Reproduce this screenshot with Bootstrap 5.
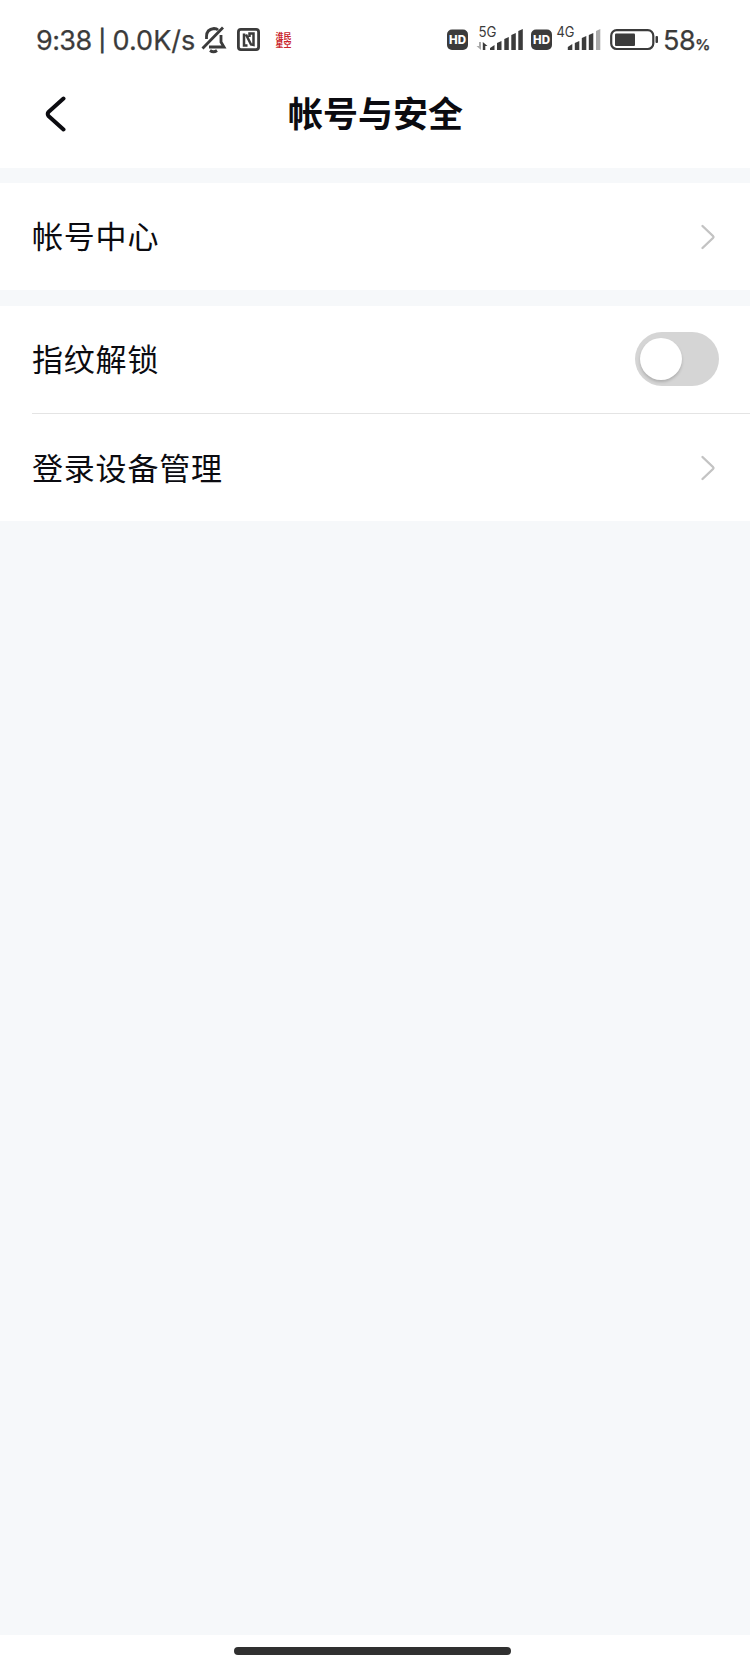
<!DOCTYPE html>
<html lang="zh-CN">
<head>
<meta charset="utf-8">
<meta name="viewport" content="width=device-width, initial-scale=1">
<title>帐号与安全</title>
<link href="https://cdn.jsdelivr.net/npm/bootstrap@5.3.0/dist/css/bootstrap.min.css" rel="stylesheet">
<style>
body{font-family:"Noto Sans CJK SC",sans-serif;background:#f6f8fa;color:#0b0b10;overflow:hidden}
svg{display:block;flex:none}
.status-bar{height:80px;padding-left:36px;color:#3b3b3b;font-family:Inter,sans-serif;line-height:1;white-space:nowrap}
.clock{font-size:27px;width:163px;letter-spacing:-.6px;-webkit-text-stroke:.25px #3b3b3b}
.clock .pipe{font-size:21px;margin:0 2px;vertical-align:2px;-webkit-text-stroke:.8px #3b3b3b}
.clock .speed{letter-spacing:.05px}
.battery-text{font-size:27px;width:60px;letter-spacing:-.4px;margin-right:28px;-webkit-text-stroke:.25px #3b3b3b}
.battery-text .digits{margin-left:1px}
.battery-text small{font-size:15px;font-weight:600}
.title-bar{height:88px;padding:0 45px 21px}
.title-bar h1{font-size:35px;font-weight:700;line-height:1;margin:0 0 4px}
.block-gap{height:15px}
.block-gap-lg{height:16px}
.setting{height:107px;padding:0 32px;font-size:31px;letter-spacing:.8px;line-height:1;color:#0b0b10}
.setting .label-text{padding-bottom:4px}
.setting .label-low{padding-bottom:3px}
.rule-line{height:1px;margin-left:32px;background:#e4e4e4}
.toggle-track{width:84px;height:54px;background:#d5d5d5;padding:6px 5px;margin-right:-1px;margin-bottom:2px}
.toggle-thumb{width:42px;height:42px;background:#fff;box-shadow:0 2px 3px rgba(0,0,0,.18)}
.nav-area{height:31px}
.home-pill{width:277px;height:8px;background:#303030;margin-right:5px}
</style>
<script src="https://cdn.jsdelivr.net/npm/bootstrap@5.3.0/dist/js/bootstrap.bundle.min.js"></script>
</head>
<body class="d-flex flex-column vh-100">
<header class="bg-white">
  <div class="status-bar d-flex align-items-center">
    <span class="clock">9:38<span class="pipe"> | </span><span class="speed">0.0K/s</span></span>
    <svg width="93" height="80" viewBox="199 0 93 80" fill="none" stroke="#3b3b3b" stroke-width="2.800">
      <path d="M206.500 39V36.500C206.500 31.500 209 29 214 28.500C216 28.600 217 29 218 30M221 35V42L224 47H209M202.500 48.500L223 27.500"/><path d="M210 50.500Q213.500 53 217 50.500"/>
      <rect x="238.400" y="29.400" width="20.200" height="20.200" rx="2.500"/>
      <path stroke-width="2.500" d="M244 33.500V45.500H247.500M246 34.500L251 44.500L253.500 45V33.500H249.500V37"/>
      <g fill="#c9252c" stroke="none" font-family="Noto Sans CJK SC" font-weight="700" font-size="8"><text x="275.500" y="38.500">淮民</text><text x="275.500" y="47">星空</text></g>
    </svg>
    <svg class="ms-auto" width="218" height="80" viewBox="444 0 218 80" fill="#3b3b3b" font-family="Inter, sans-serif">
      <rect x="447" y="29.500" width="21" height="20.500" rx="5"/>
      <text x="449" y="44" fill="#fff" font-size="11.500" font-weight="800" textLength="17">HD</text>
      <text x="478.500" y="37" font-size="14" textLength="18" lengthAdjust="spacingAndGlyphs">5G</text>
      <path d="M481 42V50L476.500 46H479V42Z" fill="#aaa"/><path d="M482.800 50V42L487.500 46H485.300V50Z"/>
      <path d="M490 50V48L494.500 45V50ZM497 50V43L501.500 41V50ZM504.300 50V39L508.800 37V50ZM511.300 50V35L515.800 33V50ZM518.300 50V31L522.800 29V50Z"/>
      <rect x="531" y="29.500" width="21" height="20.500" rx="5"/>
      <text x="533" y="44" fill="#fff" font-size="11.500" font-weight="800" textLength="17">HD</text>
      <text x="556.500" y="37" font-size="14" textLength="18" lengthAdjust="spacingAndGlyphs">4G</text>
      <path d="M567.800 50V47L572.300 44V50ZM574.800 50V43L579.300 41V50ZM581.800 50V38L586.300 36V50ZM588.800 50V35L593.300 33V50Z"/>
      <path d="M596 50V31L600.300 29V50Z" fill="#aaa"/>
      <rect x="611.200" y="30.200" width="42.100" height="18.800" rx="5.500" fill="none" stroke="#3b3b3b" stroke-width="2.200"/>
      <rect x="615" y="33.500" width="20" height="12.500" rx="1"/><rect x="655.500" y="36" width="2.500" height="7" rx="1"/>
    </svg>
    <span class="battery-text"><span class="digits">58</span><small>%</small></span>
  </div>
  <div class="title-bar d-flex align-items-center justify-content-between">
    <svg width="21" height="36" viewBox="0 0 21 36" fill="none" stroke="#0b0b10" stroke-width="4" stroke-linecap="round" stroke-linejoin="round"><path d="M18.500 2.500L3.500 16Q2 18 3.500 20L18.500 33.500"/></svg>
    <h1>帐号与安全</h1>
    <span class="ps-3 pe-1"></span>
  </div>
</header>
<div class="block-gap"></div>
<main>
  <div class="setting bg-white d-flex align-items-center justify-content-between"><span class="label-text">帐号中心</span>
    <svg width="18" height="26" viewBox="0 0 18 26" fill="none" stroke="#c3c3c3" stroke-width="2.400" stroke-linecap="round" stroke-linejoin="round"><path d="M2.500 2L13 12Q14 13 13 14L2.500 24"/></svg></div>
  <div class="block-gap-lg"></div>
  <div class="setting bg-white d-flex align-items-center justify-content-between"><span class="label-text">指纹解锁</span>
    <span class="toggle-track rounded-pill"><span class="toggle-thumb rounded-circle d-block"></span></span></div>
  <div class="bg-white"><div class="rule-line"></div></div>
  <div class="setting bg-white d-flex align-items-center justify-content-between"><span class="label-low">登录设备管理</span>
    <svg width="18" height="26" viewBox="0 0 18 26" fill="none" stroke="#c3c3c3" stroke-width="2.400" stroke-linecap="round" stroke-linejoin="round"><path d="M2.500 2L13 12Q14 13 13 14L2.500 24"/></svg></div>
</main>
<footer class="nav-area bg-white mt-auto d-flex align-items-center justify-content-center"><div class="home-pill rounded-pill"></div></footer>
</body>
</html>
